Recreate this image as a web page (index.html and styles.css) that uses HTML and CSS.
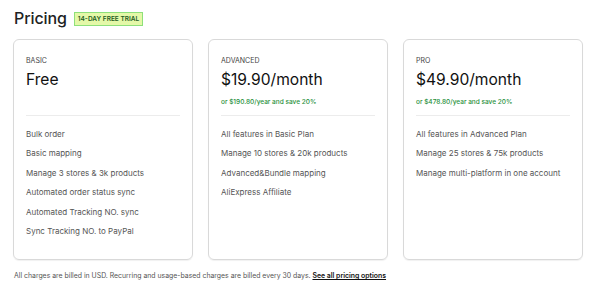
FILE: index.html
```html
<!DOCTYPE html>
<html lang="en">
<head>
    <meta charset="UTF-8">
    <meta name="viewport" content="width=device-width, initial-scale=1.0">
    <title>Pricing</title>
    <link rel="stylesheet" href="styles.css">
</head>
<body>

    <!-- Header -->
    <div class="header">
        <h1>Pricing</h1>
        <span class="badge">14-DAY FREE TRIAL</span>
    </div>

    <!-- Plans -->
    <div class="plans">
        <div class="plan">
            <div class="plan-name">BASIC</div>
            <div class="plan-price">Free</div>
            <div class="plan-save"></div>
            <ul class="features">
                <li>Bulk order</li>
                <li>Basic mapping</li>
                <li>Manage 3 stores &amp; 3k products</li>
                <li>Automated order status sync</li>
                <li>Automated Tracking NO. sync</li>
                <li>Sync Tracking NO. to PayPal</li>
            </ul>
        </div>
        <div class="plan">
            <div class="plan-name">ADVANCED</div>
            <div class="plan-price">$19.90/month</div>
            <div class="plan-save">or $190.80/year and save 20%</div>
            <ul class="features">
                <li>All features in Basic Plan</li>
                <li>Manage 10 stores &amp; 20k products</li>
                <li>Advanced&amp;Bundle mapping</li>
                <li>AliExpress Affiliate</li>
            </ul>
        </div>
        <div class="plan">
            <div class="plan-name">PRO</div>
            <div class="plan-price">$49.90/month</div>
            <div class="plan-save">or $478.80/year and save 20%</div>
            <ul class="features">
                <li>All features in Advanced Plan</li>
                <li>Manage 25 stores &amp; 75k products</li>
                <li>Manage multi-platform in one account</li>
            </ul>
        </div>
    </div>

    <p class="note">All charges are billed in USD. Recurring and usage-based charges are billed every 30 days. <a href="#">See all pricing options</a></p>

</body>
</html>
```

FILE: styles.css
```css
* {
    box-sizing: border-box;
}
body {
    font-family: Inter, "Noto Sans", sans-serif;
    margin: 0;
    padding: 7px 17px 0 13px;
    color: #202223;
    background: #fff;
}
.header {
    display: flex;
    align-items: center;
    gap: 7px;
    height: 22px;
}
.header h1 {
    font-size: 16px;
    font-weight: 500;
    margin: 0 0 0 1px;
    letter-spacing: -0.1px;
}
.badge {
    font-size: 6.5px;
    font-weight: 600;
    color: #1e5c22;
    background: #e4f8a8;
    border: 1px solid #8ee07a;
    padding: 2px 3px 1px;
    line-height: 9px;
    margin-top: 1px;
}
.plans {
    display: grid;
    grid-template-columns: repeat(3, 180px);
    justify-content: space-between;
    margin-top: 10px;
    width: 570px;
}
.plan {
    border: 1px solid #d9d9d9;
    border-radius: 6px;
    height: 221px;
    padding: 16px 12px 0;
    box-shadow: 0 1px 1px rgba(0, 0, 0, 0.06);
}
.plan-name {
    font-size: 7px;
    color: #444;
    line-height: 9px;
}
.plan-price {
    font-size: 15.6px;
    color: #111;
    margin-top: 5px;
    line-height: 20px;
}
.plan-save {
    font-size: 6.5px;
    font-weight: 500;
    color: #1f8f3a;
    height: 9px;
    line-height: 9px;
    margin-top: 8px;
}
.features {
    list-style-type: none;
    margin: 8px 0 0;
    padding: 13px 0 0;
    border-top: 1px solid #ececec;
}
.features li {
    font-size: 8px;
    color: #555;
    line-height: 10px;
    margin-bottom: 9.4px;
}
.note {
    font-size: 6.9px;
    color: #555;
    margin: 11px 0 0 1px;
    line-height: 10px;
}
.note a {
    color: #111;
    font-weight: 600;
    text-decoration: underline;
}
```
